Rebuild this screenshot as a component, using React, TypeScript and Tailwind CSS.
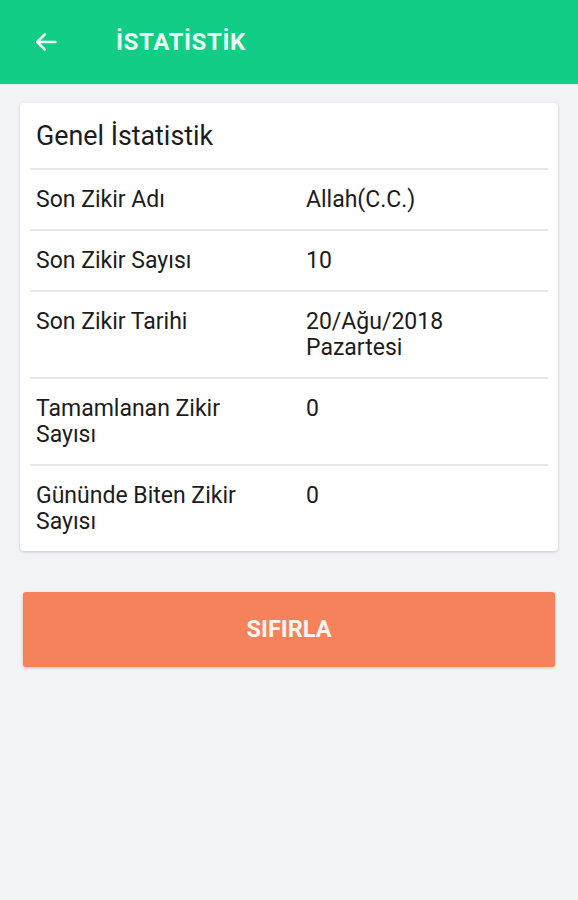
import React from 'react'

const rows: { label: string; value: string }[] = [
  { label: 'Son Zikir Adı', value: 'Allah(C.C.)' },
  { label: 'Son Zikir Sayısı', value: '10' },
  { label: 'Son Zikir Tarihi', value: '20/Ağu/2018\nPazartesi' },
  { label: 'Tamamlanan Zikir\nSayısı', value: '0' },
  { label: 'Gününde Biten Zikir\nSayısı', value: '0' },
]

const App = () => {
  return (
    <div className="min-h-[900px] bg-[#f1f3f7] font-['Roboto',sans-serif]">
      {/* Top bar */}
      <div className="h-[84px] bg-[#12cd85] flex items-center">
        <button className="ml-[31px] w-[30px] h-[30px] flex items-center justify-center text-[#f2fcf7]">
          <svg width="28" height="28" viewBox="0 0 24 24" fill="none" stroke="currentColor" strokeWidth="2.2" strokeLinecap="round" strokeLinejoin="round">
            <path d="M20 12H4.5" />
            <path d="M11 5.5 4.5 12l6.5 6.5" />
          </svg>
        </button>
        <h1 className="ml-[55px] text-[24px] font-bold tracking-[0.6px] text-[#ebfaf3]">İSTATİSTİK</h1>
      </div>

      {/* Card */}
      <div className="mx-[20px] mt-[19px] bg-white rounded-[4px] shadow-[0_1px_3px_rgba(0,0,0,0.18)]">
        <div className="h-[65px] flex items-center px-[16px]">
          <h2 className="text-[26.8px] text-[#1c1c1c] pt-[1px]">Genel İstatistik</h2>
        </div>
        <div className="px-[10px]">
          {rows.map((row, i) => (
            <div key={i} className="border-t-2 border-[#e6e7ea] flex pt-[17px] pb-[16px] text-[23px] leading-[26px] text-[#1c1c1c]">
              <div className="w-[276px] pl-[6px] whitespace-pre-line">{row.label}</div>
              <div className="whitespace-pre-line">{row.value}</div>
            </div>
          ))}
        </div>
      </div>

      {/* Reset button */}
      <div className="mx-[23px] mt-[41px]">
        <button className="w-full h-[75px] bg-[#f5825b] rounded-[3px] shadow-[0_1px_3px_rgba(0,0,0,0.2)] text-[#fff4ef] text-[23.5px] font-bold">
          SIFIRLA
        </button>
      </div>
    </div>
  )
}

export default App
